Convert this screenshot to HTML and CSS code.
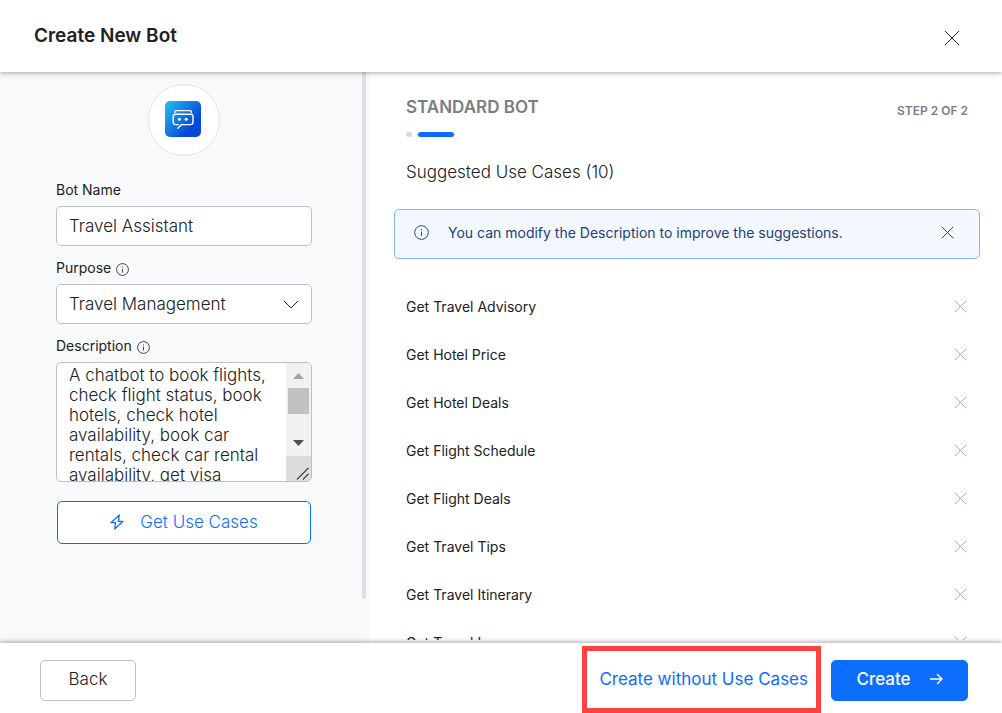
FILE: index.html
```html
<!DOCTYPE html>
<html lang="en">
<head>
<meta charset="utf-8">
<title>Create New Bot</title>
<link rel="stylesheet" href="styles.css">
</head>
<body>
<svg class="defs" aria-hidden="true">
  <symbol id="x" viewBox="0 0 16 16"><path d="M1 1 15 15M15 1 1 15"/></symbol>
  <symbol id="info" viewBox="0 0 16 16"><circle cx="8" cy="8" r="7.3"/><path d="M8 7v4.8M8 4.2v1.3"/></symbol>
</svg>
<header class="header">
  <h1 class="title">Create New Bot</h1>
  <button class="icon-btn close" type="button" aria-label="Close"><svg><use href="#x"/></svg></button>
</header>
<main class="body">
  <form class="sidebar">
    <div class="avatar">
      <svg class="logo" viewBox="0 0 36 36">
        <defs><linearGradient id="g" x1="0" y1="0.1" x2="1" y2="0.9"><stop offset="0" stop-color="#27b9ec"/><stop offset=".75" stop-color="#0549d8"/><stop offset="1" stop-color="#0549d8"/></linearGradient></defs>
        <rect width="36" height="36" rx="5" fill="url(#g)"/>
        <path d="M9.8 11.6v-.4q0-1.6 1.6-1.6h13.5q1.6 0 1.6 1.6v.4M13.3 23.6h-2.5q-2.6 0-2.6-2.6v-5.2q0-2.6 2.6-2.6h14.6q2.6 0 2.6 2.6V21q0 2.6-2.6 2.6h-8.9l-3.7 3.6" fill="none" stroke="#fff" stroke-width="1.4" stroke-linecap="round" stroke-linejoin="round"/>
        <circle cx="14.4" cy="18.2" r="1.5" fill="#fff"/><circle cx="21.2" cy="18.2" r="1.5" fill="#fff"/>
      </svg>
    </div>
    <div class="field">
      <label class="label" for="name">Bot Name</label>
      <input class="control" id="name" type="text" value="Travel Assistant">
    </div>
    <div class="field">
      <label class="label" for="purpose">Purpose <svg class="info"><use href="#info"/></svg></label>
      <div class="select">
        <select class="control" id="purpose"><option>Travel Management</option></select>
        <svg class="chevron" viewBox="0 0 16 9"><path d="M1 1l7 7 7-7"/></svg>
      </div>
    </div>
    <div class="field">
      <label class="label" for="desc">Description <svg class="info"><use href="#info"/></svg></label>
      <div class="area">
        <textarea class="text" id="desc">A chatbot to book flights, check flight status, book hotels, check hotel availability, book car rentals, check car rental availability, get visa information</textarea>
        <svg class="scroll" viewBox="0 0 25 118" aria-hidden="true">
          <path fill="#f1f1f1" d="M0 0h25v118H0z"/><path fill="#dcdcdc" d="M0 93h25v25H0z"/>
          <path fill="#c1c1c1" d="M2 25h21v26H2z"/>
          <path fill="#a3a3a3" d="M7 16h11l-5.500-6z"/><path fill="#505050" d="M7 77h11l-5.500 6z"/>
          <path stroke="#fff" stroke-width="1" d="M12 117 23 106M18 117 23 112"/>
          <path stroke="#4a4a4a" stroke-width="1.500" d="M11 116.500 22.500 105M17 116.500 22.500 111"/>
        </svg>
      </div>
    </div>
    <button class="btn suggest" type="button">
      <svg class="bolt" viewBox="0 0 14 16"><path d="M9.300 1 1 8.700h4.600L4.700 15 13 7.300H8.400z"/></svg>
      Get Use Cases
    </button>
  </form>
  <div class="track"><div class="thumb"></div></div>
  <section class="content">
    <div class="top">
      <h2 class="kind">STANDARD BOT</h2>
      <span class="step">STEP 2 OF 2</span>
    </div>
    <div class="progress"><span class="dot"></span><span class="bar"></span></div>
    <h3 class="subtitle">Suggested Use Cases (10)</h3>
    <div class="alert">
      <svg class="alert-icon"><use href="#info"/></svg>
      <span class="alert-text">You can modify the Description to improve the suggestions.</span>
      <button class="icon-btn dismiss" type="button" aria-label="Dismiss"><svg><use href="#x"/></svg></button>
    </div>
    <ul class="list">
      <li class="item">Get Travel Advisory<button class="icon-btn remove" type="button" aria-label="Remove"><svg><use href="#x"/></svg></button></li>
      <li class="item">Get Hotel Price<button class="icon-btn remove" type="button" aria-label="Remove"><svg><use href="#x"/></svg></button></li>
      <li class="item">Get Hotel Deals<button class="icon-btn remove" type="button" aria-label="Remove"><svg><use href="#x"/></svg></button></li>
      <li class="item">Get Flight Schedule<button class="icon-btn remove" type="button" aria-label="Remove"><svg><use href="#x"/></svg></button></li>
      <li class="item">Get Flight Deals<button class="icon-btn remove" type="button" aria-label="Remove"><svg><use href="#x"/></svg></button></li>
      <li class="item">Get Travel Tips<button class="icon-btn remove" type="button" aria-label="Remove"><svg><use href="#x"/></svg></button></li>
      <li class="item">Get Travel Itinerary<button class="icon-btn remove" type="button" aria-label="Remove"><svg><use href="#x"/></svg></button></li>
      <li class="item">Get Travel Insurance<button class="icon-btn remove" type="button" aria-label="Remove"><svg><use href="#x"/></svg></button></li>
    </ul>
  </section>
</main>
<footer class="footer">
  <button class="btn back" type="button">Back</button>
  <div class="highlight"><button class="btn link" type="button">Create without Use Cases</button></div>
  <button class="btn primary" type="button">Create
    <svg class="arrow" viewBox="0 0 14 12"><path d="M1 6h12M8 1l5 5-5 5"/></svg>
  </button>
</footer>
</body>
</html>
```
FILE: styles.css
```css
* { box-sizing: border-box; }
body {
  margin: 0;
  height: 100vh;
  display: flex;
  flex-direction: column;
  overflow: hidden;
  background: #fff;
  color: #202124;
  font-family: Inter, "Liberation Sans", sans-serif;
  font-size: 17px;
  line-height: 24px;
}
h1, h2, h3, ul { margin: 0; padding: 0; }
button, input, select, textarea { font: inherit; color: inherit; }
svg { display: block; fill: none; stroke: currentColor; flex: none; }
.defs { position: absolute; width: 0; height: 0; }
.logo, .scroll { stroke: none; }

.header, .footer {
  display: flex;
  align-items: center;
  flex: none;
  background: #fff;
  z-index: 1;
}
.header {
  justify-content: space-between;
  height: 72px;
  padding: 0 42px 0 34px;
  box-shadow: 0 1px 5px rgba(0, 0, 0, .35);
}
.title { font-size: 19px; font-weight: 600; }
.icon-btn { padding: 0; border: 0; background: none; }
.icon-btn svg { width: 13px; height: 13px; }
.close { padding-top: 3px; }
.icon-btn.close svg { width: 16px; height: 16px; }

.body { flex: 1; display: flex; min-height: 0; }
.sidebar {
  flex: none;
  width: 362px;
  padding: 12px 50px 0 56px;
  background: #f8f9fb;
}
.avatar {
  width: 72px;
  height: 72px;
  margin: 0 auto 24px;
  padding: 0 2px 2px 0;
  display: grid;
  place-items: center;
  border: 1px solid #e2e3e6;
  border-radius: 50%;
  background: #fff;
}
.logo { width: 36px; height: 36px; }
.field { margin-bottom: 12px; }
.label {
  display: flex;
  align-items: center;
  gap: 5px;
  margin-bottom: 6px;
  font-size: 14px;
  line-height: 20px;
}
.info { width: 13px; height: 13px; margin-top: 2px; }
.control {
  display: block;
  width: 100%;
  height: 40px;
  padding: 0 12px;
  border: 1px solid #bdc1c6;
  border-radius: 5px;
  background: #fff;
  font-weight: 300;
  appearance: none;
}
.select { display: grid; align-items: center; }
.select > * { grid-area: 1 / 1; }
.chevron { width: 16px; height: 9px; margin-right: 13px; justify-self: end; pointer-events: none; }
.area {
  display: flex;
  height: 120px;
  border: 1px solid #bdc1c6;
  border-radius: 5px;
  background: #fff;
  overflow: hidden;
}
.text {
  flex: 1;
  min-width: 0;
  padding: 2px 12px 0;
  border: 0;
  background: none;
  font-weight: 300;
  line-height: 20px;
  overflow: hidden;
  resize: none;
}
.scroll { width: 25px; height: 118px; }

.btn {
  display: flex;
  align-items: center;
  justify-content: center;
  height: 41px;
  padding: 0 0 2px;
  border: 1px solid #bdc1c6;
  border-radius: 5px;
  background: #fff;
  font-weight: 300;
  white-space: nowrap;
}
.suggest {
  width: calc(100% - 2px);
  height: 43px;
  margin: 19px auto 0;
  gap: 16px;
  border-color: #0d6efd;
  color: #0d6efd;
}
.bolt { width: 14px; height: 16px; stroke-width: 1.3; stroke-linejoin: round; }

.track { flex: none; width: 8px; background: #f9fafb; }
.thumb { width: 4px; height: 527px; border-radius: 0 0 2px 2px; background: #dfe0e3; }

.content {
  flex: 1;
  min-width: 0;
  margin-bottom: 3px;
  padding: 24px 34px 0 36px;
  overflow: hidden;
}
.top { display: flex; justify-content: space-between; color: #7a7d82; }
.kind { font-size: 17px; line-height: 22px; font-weight: 600; }
.step { padding-top: 4px; font-size: 12px; line-height: 22px; font-weight: 600; }
.progress { display: flex; gap: 6px; margin-top: 10px; }
.dot { width: 6px; height: 5px; border-radius: 3px; background: #d8d9db; }
.bar { width: 36px; height: 5px; border-radius: 3px; background: #0d6efd; }
.subtitle { margin: 23px 0 25px; font-size: 17px; font-weight: 300; }
.alert {
  display: flex;
  align-items: center;
  height: 50px;
  margin: 0 -12px 24px;
  padding: 0 25px 4px 19px;
  border: 1px solid #86b7fe;
  border-radius: 5px;
  background: #f3f8ff;
  color: #1f3f77;
  font-size: 14px;
}
.alert-icon { width: 15px; height: 15px; margin-right: 19px; }
.alert-text { flex: 1; padding-top: 2px; font-weight: 400; }
.dismiss { color: #202124; }
.list { list-style: none; }
.item {
  display: flex;
  align-items: center;
  justify-content: space-between;
  height: 48px;
  font-size: 14px;
}
.remove { padding: 0 1px 2px 0; color: #9da1a6; }

.footer {
  height: 70px;
  padding: 4px 34px 0 40px;
  box-shadow: 0 -1px 5px rgba(0, 0, 0, .35);
}
.back { width: 96px; }
.highlight {
  display: flex;
  align-items: center;
  align-self: stretch;
  margin: -1px 10px 0 auto;
  padding: 0 8px 0 12px;
  border: 5px solid #ff4141;
}
.link { border: 0; color: #0d6efd; font-weight: 400; }
.primary {
  width: 137px;
  gap: 18px;
  border-color: #0d6efd;
  background: #0d6efd;
  color: #fff;
  font-weight: 500;
}
.arrow { width: 14px; height: 12px; stroke-width: 1.4; }
```
